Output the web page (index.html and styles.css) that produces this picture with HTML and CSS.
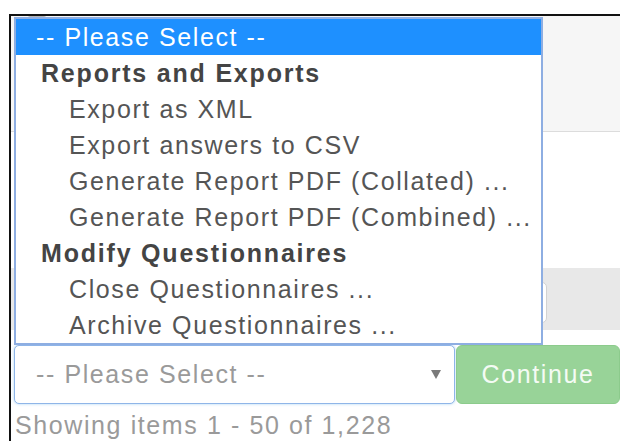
FILE: index.html
```html
<!DOCTYPE html>
<html lang="en">
<head>
<meta charset="utf-8">
<title>Questionnaires</title>
<link rel="stylesheet" href="styles.css">
</head>
<body>
<div class="frame">
  <div class="panel-heading"><span class="check"></span></div>
  <div class="panel-body"></div>
  <div class="toolbar"><div class="search-box"></div></div>
  <div class="actions">
    <div class="select">
      <span class="select-value">-- Please Select --</span>
      <span class="caret"></span>
    </div>
    <button class="btn-continue" type="button" disabled>Continue</button>
  </div>
  <div class="summary">Showing items 1 - 50 of 1,228</div>

  <!-- open option list of the bulk-action select -->
  <div class="dropdown">
    <div class="opt placeholder selected">-- Please Select --</div>
    <div class="group">Reports and Exports</div>
    <div class="opt">Export as XML</div>
    <div class="opt">Export answers to CSV</div>
    <div class="opt">Generate Report PDF (Collated) ...</div>
    <div class="opt">Generate Report PDF (Combined) ...</div>
    <div class="group">Modify Questionnaires</div>
    <div class="opt">Close Questionnaires ...</div>
    <div class="opt">Archive Questionnaires ...</div>
  </div>
</div>
</body>
</html>
```

FILE: styles.css
```css
html, body {
  margin: 0;
  padding: 0;
  background: #fff;
  overflow: hidden;
}

body {
  font-family: "Liberation Sans", Arial, sans-serif;
  font-size: 25px;
  letter-spacing: 1.6px;
  color: #555;
}

.frame {
  position: relative;
  margin: 14px 0 0 9px;
  height: 425px;
  border-top: 2px solid #111;
  border-left: 2px solid #111;
  overflow: hidden;
}

.panel-heading {
  height: 115px;
  background: #f6f6f6;
  border-bottom: 1px solid #dcdcdc;
  padding-left: 16px;
}

.check {
  display: block;
  width: 18px;
  height: 18px;
  border: 1px solid #b5b5b5;
  border-radius: 3px;
  background: #fff;
}

.panel-body {
  height: 136px;
}

.toolbar {
  height: 48px;
  padding: 14px 0 0 3px;
  background: #e8e8e8;
}

.search-box {
  width: 531px;
  height: 39px;
  background: #fff;
  border: 1px solid #d2d2d2;
  border-radius: 5px;
}

.actions {
  display: flex;
  margin-top: 15px;
  padding-left: 3px;
  height: 59px;
}

.select {
  box-sizing: border-box;
  width: 441px;
  height: 59px;
  display: flex;
  align-items: center;
  justify-content: space-between;
  padding: 0 13px 0 21px;
  border: 1px solid #8fb5e8;
  border-radius: 5px;
  box-shadow: 0 0 3px rgba(102, 175, 233, 0.55);
  background: #fff;
}

.select-value {
  color: #9a9a9a;
}

.caret {
  width: 0;
  height: 0;
  border-left: 5.5px solid transparent;
  border-right: 5.5px solid transparent;
  border-top: 9px solid #7a7a7a;
}

.btn-continue {
  box-sizing: border-box;
  width: 164px;
  height: 59px;
  margin-left: 1px;
  padding: 0;
  font: inherit;
  letter-spacing: 1.6px;
  color: #f4fbf4;
  background: #98d398;
  border: 1px solid #8ccb8c;
  border-radius: 6px;
  cursor: not-allowed;
}

.summary {
  margin-top: 6px;
  padding-left: 4px;
  line-height: 30px;
  color: #9a9a9a;
  white-space: nowrap;
}

.dropdown {
  position: absolute;
  left: 3px;
  top: 1px;
  width: 525px;
  background: #fff;
  border: 2px solid #8eaee2;
  line-height: 36px;
  white-space: nowrap;
}

.opt {
  padding-left: 53px;
  color: #555;
}

.opt.placeholder {
  padding-left: 20px;
}

.opt.selected {
  background: #1e90ff;
  color: #fff;
}

.group {
  padding-left: 25px;
  font-weight: bold;
  letter-spacing: 1.8px;
  color: #444;
}
```
